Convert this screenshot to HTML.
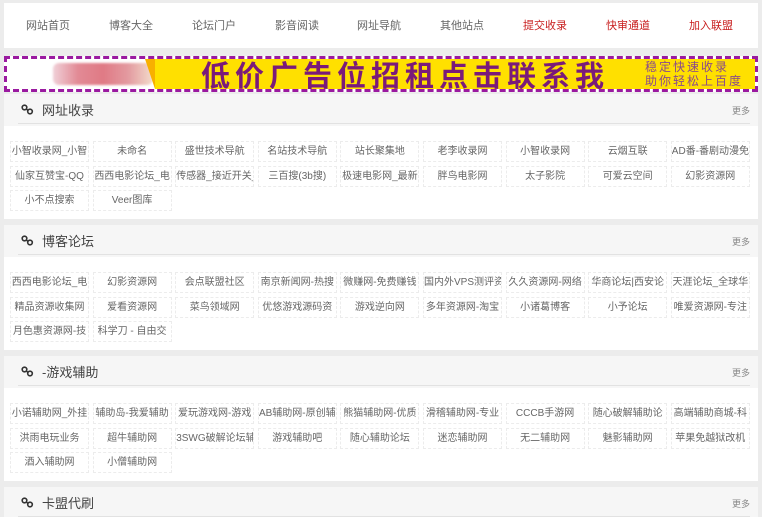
<!DOCTYPE html><html><head><meta charset="utf-8"><style>
*{margin:0;padding:0;box-sizing:border-box}
html,body{width:762px;height:517px;overflow:hidden}
body{background:#ececec;font-family:"Liberation Sans","Noto Sans CJK SC",sans-serif;position:relative}
.nav{position:absolute;left:4px;top:3px;width:754px;height:45px;background:#fff}
.nav span{position:absolute;top:14px;font-size:11px;color:#666}
.nav span.r{color:#c81e1e}
.ban{position:absolute;left:4px;top:56px;width:754px;height:36px;border:3px dashed #9a1aa0;background:#fff;overflow:hidden}
.y{position:absolute;left:148px;top:0;width:606px;height:30px;background:#ffe000}
.y:before{content:"";position:absolute;left:-10px;top:0;border-left:10px solid transparent;border-top:30px solid #f8b000}
.big{position:absolute;left:194px;top:0;font-size:29px;line-height:30px;font-weight:bold;color:#7a1a7a;letter-spacing:5px;white-space:nowrap;font-family:"Noto Sans CJK SC",sans-serif}
.sm{position:absolute;left:638px;top:1px;font-size:12px;line-height:14px;letter-spacing:2px;color:#8a4a8a;font-family:"Noto Sans CJK SC",sans-serif}
.blur{position:absolute;left:46px;top:4px;width:100px;height:22px;background:linear-gradient(90deg,#f0d0d8,#e28a95,#e07a85,#e39aa0,#f3dccb);filter:blur(1px);border-radius:6px}
.p{position:absolute;left:4px;width:754px;background:#fff}
.h{height:32px;background:#f6f6f6;position:relative}
.h:after{content:"";position:absolute;left:14px;right:8px;top:29px;height:1px;background:#e2e2e2}
.h b{position:absolute;left:38px;top:6px;font-size:13px;font-weight:normal;color:#444}
.h i{position:absolute;right:8px;top:10px;font-size:9px;font-style:normal;color:#888}
.h svg{position:absolute;left:17px;top:10px}
.t{position:absolute;height:21px;width:79px;border:1px dashed #ececec;font-size:10px;color:#666;text-align:center;line-height:19px;white-space:nowrap;overflow:hidden}
</style></head><body>
<div class="nav">
<span style="left:22px">网站首页</span><span style="left:105px">博客大全</span><span style="left:188px">论坛门户</span><span style="left:271px">影音阅读</span><span style="left:353px">网址导航</span><span style="left:436px">其他站点</span><span class="r" style="left:519px">提交收录</span><span class="r" style="left:602px">快审通道</span><span class="r" style="left:685px">加入联盟</span>
</div>
<div class="ban"><div class="blur"></div><div class="y"></div><div class="big">低价广告位招租点击联系我</div><div class="sm">稳定快速收录<br>助你轻松上百度</div></div>
<div id="c"></div>
<script>
var S=[
[94,"网址收录",["小智收录网_小智","未命名","盛世技术导航","名站技术导航","站长聚集地","老李收录网","小智收录网","云烟互联","AD番-番剧动漫免","仙家互赞宝-QQ","西西电影论坛_电","传感器_接近开关_","三百搜(3b搜)","极速电影网_最新","胖鸟电影网","太子影院","可爱云空间","幻影资源网","小不点搜索","Veer图库"]],
[225,"博客论坛",["西西电影论坛_电","幻影资源网","会点联盟社区","南京新闻网-热搜","微赚网-免费赚钱","国内外VPS测评资","久久资源网-网络","华商论坛|西安论","天涯论坛_全球华","精品资源收集网","爱看资源网","菜鸟领域网","优悠游戏源码资","游戏逆向网","多年资源网-淘宝","小诸葛博客","小予论坛","唯爱资源网-专注","月色惠资源网-技","科学刀 - 自由交"]],
[356,"-游戏辅助",["小诺辅助网_外挂","辅助岛-我爱辅助","爱玩游戏网-游戏","AB辅助网-原创辅","熊猫辅助网-优质","滑稽辅助网-专业","CCCB手游网","随心破解辅助论","高端辅助商城-科","洪雨电玩业务","超牛辅助网","3SWG破解论坛辅","游戏辅助吧","随心辅助论坛","迷恋辅助网","无二辅助网","魅影辅助网","苹果免越狱改机","酒入辅助网","小僧辅助网"]],
[487,"卡盟代刷",[]]];
var ic='<svg width="13" height="11" viewBox="0 0 13 11"><circle cx="3.5" cy="3.5" r="2.3" fill="none" stroke="#333" stroke-width="1.6"/><circle cx="9" cy="7.5" r="2.3" fill="none" stroke="#333" stroke-width="1.6"/><path d="M5 5l2.5 1.5" stroke="#333" stroke-width="1.6"/></svg>';
var h="";
S.forEach(function(s){var T=s[0];h+='<div class="p" style="top:'+T+'px;height:'+(s[2].length?125:40)+'px"><div class="h">'+ic+'<b>'+s[1]+'</b><i>更多</i></div></div>';
s[2].forEach(function(t,k){var r=Math.floor(k/9),c=k%9;h+='<div class="t" style="left:'+(10+c*82.6)+'px;top:'+(T+47+r*24.5)+'px">'+t+'</div>';});});
document.getElementById("c").innerHTML=h;
</script>
</body></html>
